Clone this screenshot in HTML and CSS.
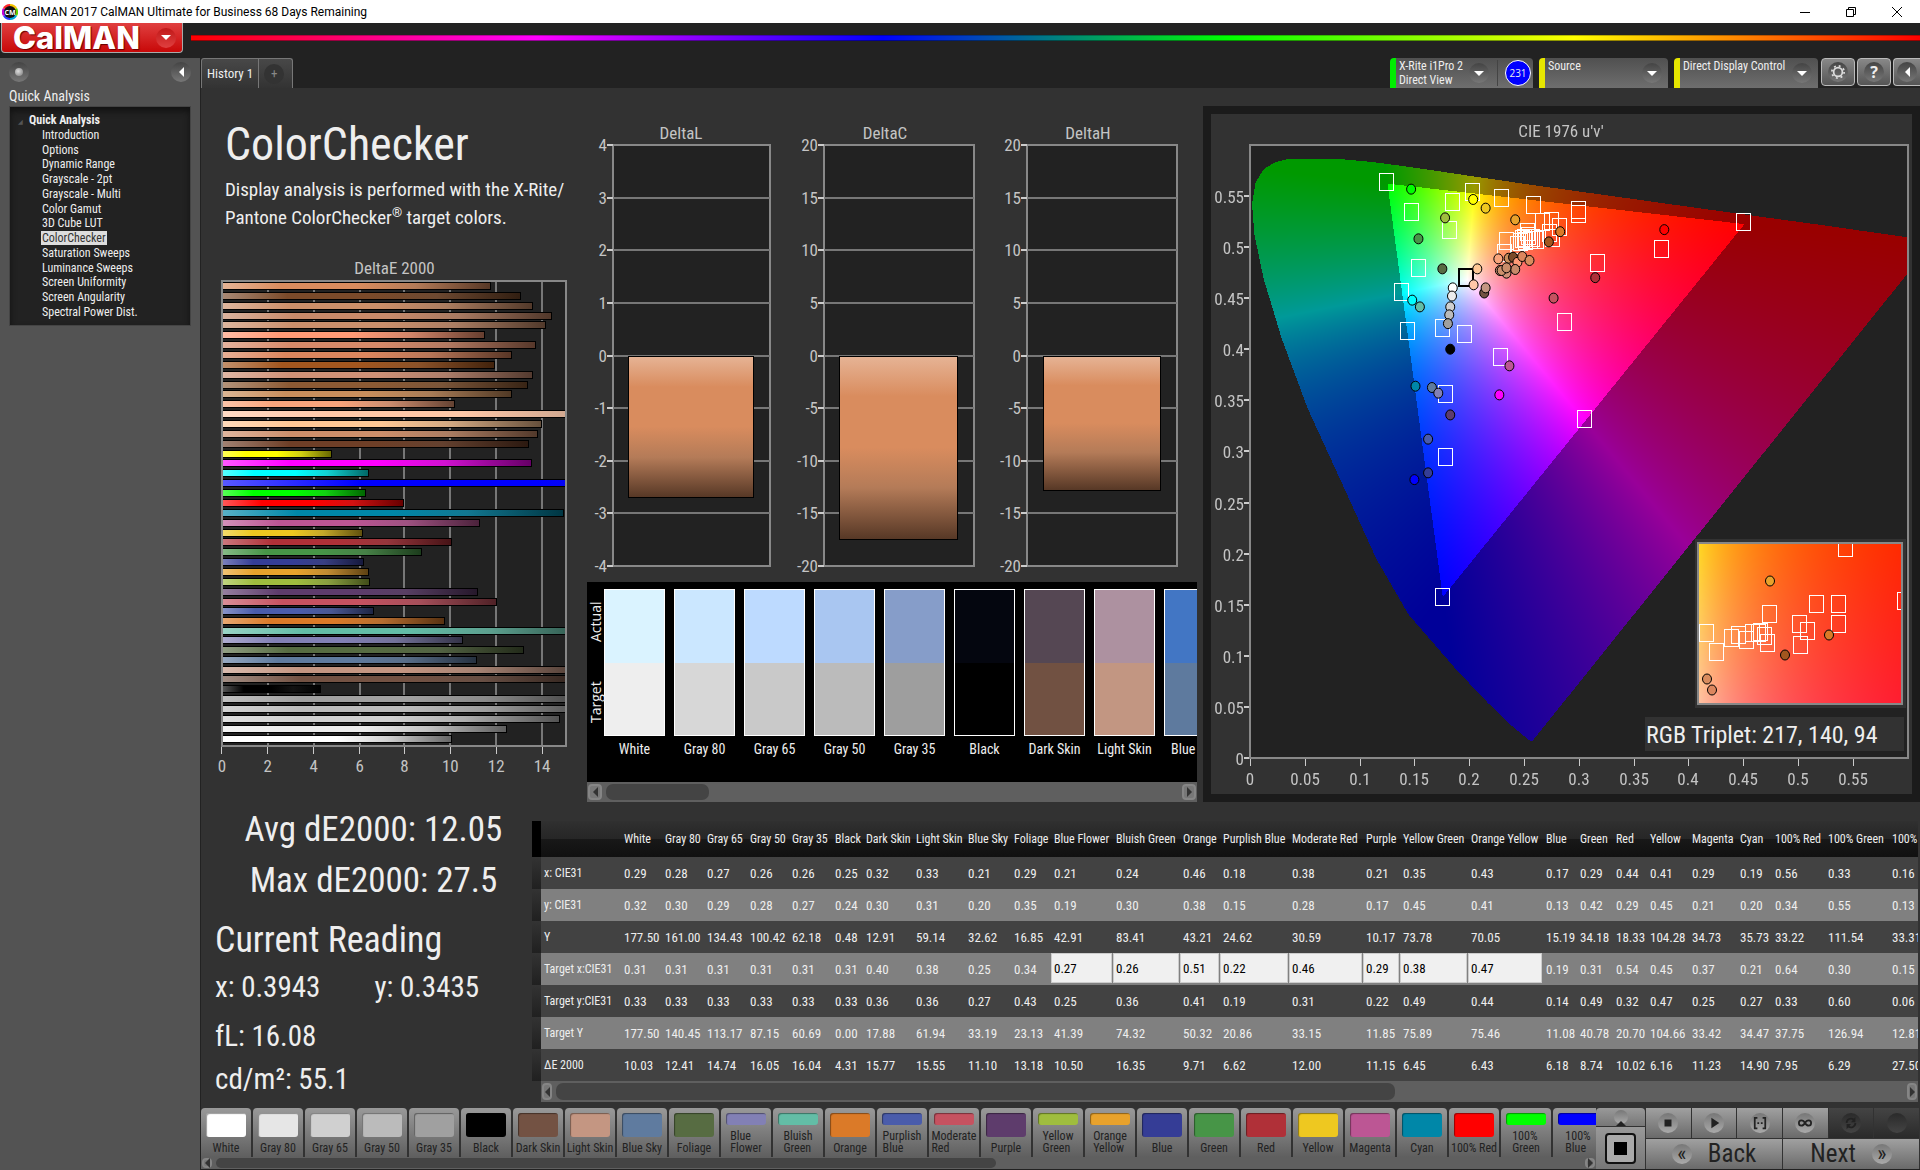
FILE: index.html
```html
<!DOCTYPE html>
<html lang="en">
<head>
  <meta charset="UTF-8" />
  <meta name="viewport" content="width=device-width, initial-scale=1.0"/>
  <title>CalMAN 2017 - ColorChecker</title>
  <link rel="stylesheet" href="styles.css">
</head>
<body>
  <div class="titlebar">
    <svg class="app-icon" viewBox="0 0 16 16" aria-hidden="true">
      <path d="M8 8V0A8 8 0 0 1 15 4z" fill="#f5c400"/>
      <path d="M8 8L15 4A8 8 0 0 1 15 12z" fill="#5fd400"/>
      <path d="M8 8L15 12A8 8 0 0 1 8 16z" fill="#00a8d8"/>
      <path d="M8 8V16A8 8 0 0 1 1 12z" fill="#2a3cff"/>
      <path d="M8 8L1 12A8 8 0 0 1 1 4z" fill="#c400d8"/>
      <path d="M8 8L1 4A8 8 0 0 1 8 0z" fill="#ff2a2a"/>
      <circle cx="8" cy="8" r="6" fill="#111"/>
      <text x="8" y="11" text-anchor="middle" class="app-icon-text">CM</text>
    </svg>
    <span class="titlebar-text">CalMAN 2017 CalMAN Ultimate for Business 68 Days Remaining</span>
    <div class="window-buttons">
      <button aria-label="Minimize"><svg viewBox="0 0 10 10"><path d="M0 5.5H10"/></svg></button>
      <button aria-label="Restore"><svg viewBox="0 0 10 10"><path d="M.5 2.5h7v7h-7zM2.5 2.5v-2h7v7h-2"/></svg></button>
      <button aria-label="Close"><svg viewBox="0 0 10 10"><path d="M0 0L10 10M10 0L0 10"/></svg></button>
    </div>
  </div>

  <header class="brand">
    <button class="logo">CalMAN<span class="logo-knob"><i class="tri down"></i></span></button>
    <div class="rainbow"></div>
  </header>

  <div class="workspace">
    <aside class="sidebar">
      <div class="sidebar-top">
        <button class="knob" aria-label="Pin"><i class="dot"></i></button>
        <button class="knob" aria-label="Collapse"><i class="tri left"></i></button>
      </div>
      <h2>Quick Analysis</h2>
      <nav class="tree">
        <div class="tree-root">Quick Analysis</div>
        <a href="#">Introduction</a>
        <a href="#">Options</a>
        <a href="#">Dynamic Range</a>
        <a href="#">Grayscale - 2pt</a>
        <a href="#">Grayscale - Multi</a>
        <a href="#">Color Gamut</a>
        <a href="#">3D Cube LUT</a>
        <a href="#" class="current">ColorChecker</a>
        <a href="#">Saturation Sweeps</a>
        <a href="#">Luminance Sweeps</a>
        <a href="#">Screen Uniformity</a>
        <a href="#">Screen Angularity</a>
        <a href="#">Spectral Power Dist.</a>
      </nav>
    </aside>

    <main class="main">
      <div class="toolbar">
        <div class="tabs">
          <button class="tab">History 1</button>
          <button class="tab tab-add" aria-label="Add history"><span>+</span></button>
        </div>
        <div class="devices">
          <button class="device meter">
            <span class="device-name">X-Rite i1Pro 2<br>Direct View</span>
            <span class="knob"><i class="tri down"></i></span>
            <span class="badge-cell"><span class="badge">231</span></span>
          </button>
          <button class="device source">
            <span class="device-name">Source</span>
            <span class="knob"><i class="tri down"></i></span>
          </button>
          <button class="device display">
            <span class="device-name">Direct Display Control</span>
            <span class="knob"><i class="tri down"></i></span>
          </button>
          <button class="tool" aria-label="Settings"><span class="knob">
            <svg viewBox="0 0 16 16" width="14" height="14"><circle cx="8" cy="8" r="5" fill="none" stroke="#ddd" stroke-width="2"/><circle cx="8" cy="8" r="7" fill="none" stroke="#ddd" stroke-width="2" stroke-dasharray="2.2 3.3"/></svg>
          </span></button>
          <button class="tool" aria-label="Help"><span class="knob">?</span></button>
          <button class="tool" aria-label="Hide"><span class="knob"><i class="tri left"></i></span></button>
        </div>
      </div>

      <div class="page">
        <section class="intro">
          <h1>ColorChecker</h1>
          <p>Display analysis is performed with the X-Rite/<br>Pantone ColorChecker<sup>®</sup> target colors.</p>
          <svg id="deltaE" viewBox="0 0 387 530" role="img" aria-label="DeltaE 2000"></svg>
        </section>

        <section class="deltas">
          <svg id="deltas" viewBox="0 0 616 460" role="img" aria-label="DeltaL, DeltaC, DeltaH"></svg>
          <div class="compare">
            <div class="compare-sides"><span>Actual</span><span>Target</span></div>
            <div class="compare-list" id="compare"></div>
          </div>
          <div class="scrollbar scroll-compare">
            <button aria-label="Scroll left"><i class="tri left"></i></button>
            <div class="thumb"></div>
            <button aria-label="Scroll right"><i class="tri right"></i></button>
          </div>
        </section>

        <section class="cie">
          <div class="cie-stack">
            <canvas id="gamut" width="701" height="680"></canvas>
            <svg id="cie" viewBox="0 0 701 680" role="img" aria-label="CIE 1976 u'v'"></svg>
          </div>
        </section>
      </div>

      <div class="results">
        <section class="stats">
          <div class="big">Avg dE2000: 12.05</div>
          <div class="big">Max dE2000: 27.5</div>
          <h3>Current Reading</h3>
          <div class="reading pair"><span>x: 0.3943</span><span>y: 0.3435</span></div>
          <div class="reading">fL: 16.08</div>
          <div class="reading">cd/m²: 55.1</div>
        </section>
        <section class="grid-wrap">
          <div class="grid-body">
            <div class="grip" id="grip"></div>
            <div class="grid-clip"><table class="grid" id="grid"></table></div>
          </div>
          <div class="scrollbar scroll-grid">
            <button aria-label="Scroll left"><i class="tri left"></i></button>
            <div class="thumb"></div>
            <button aria-label="Scroll right"><i class="tri right"></i></button>
          </div>
        </section>
      </div>

      <footer class="bottom">
        <div class="patches-wrap">
          <div class="patches" id="patches"></div>
          <div class="scrollbar scroll-patches">
            <button aria-label="Scroll left"><i class="tri left"></i></button>
            <div class="thumb"></div>
            <button aria-label="Scroll right"><i class="tri right"></i></button>
          </div>
        </div>
        <div class="window-ctl">
          <button class="up" aria-label="Expand"><span class="pill"><i class="tri up"></i></span></button>
          <button class="pattern" aria-label="Pattern window"><i></i></button>
        </div>
        <div class="transport">
          <div class="transport-row">
            <button aria-label="Stop"><span class="pill"><svg viewBox="0 0 16 16"><path d="M4 4h8v8H4z"/></svg></span></button>
            <button aria-label="Play"><span class="pill"><svg viewBox="0 0 16 16"><path d="M5 2l9 6-9 6z"/></svg></span></button>
            <button aria-label="Read series"><span class="pill"><svg viewBox="0 0 16 16"><path d="M1 1h4v2H3v10h2v2H1zM15 1h-4v2h2v10h-2v2h4zM5 7h2v2H5zM9 7h2v2H9z"/></svg></span></button>
            <button aria-label="Read continuous"><span class="pill"><svg viewBox="0 0 16 16"><path class="line" d="M8 8C6 4 1 4 1 8s5 4 7 0 7-4 7 0-5 4-7 0z"/></svg></span></button>
            <button class="off" aria-label="Auto calibrate"><span class="pill"><svg viewBox="0 0 16 16"><path class="line" d="M3 8a5 5 0 0 1 8-4M13 8a5 5 0 0 1-8 4"/><path d="M13 1v6H8zM3 15V9h5z"/></svg></span></button>
            <button class="off" aria-label="Unavailable"><span class="pill"></span></button>
          </div>
          <div class="transport-row">
            <button class="nav-btn"><span class="pill">«</span>Back</button>
            <button class="nav-btn">Next<span class="pill">»</span></button>
          </div>
        </div>
      </footer>
    </main>
  </div>

  <script src="script.js"></script>
</body>
</html>
```
FILE: styles.css
```css
* {
  box-sizing: border-box;
}

body {
  margin: 0;
  min-height: 100vh;
  display: flex;
  flex-direction: column;
  background: #222;
  color: #eee;
  font-family: 'Roboto Condensed', 'Open Sans', sans-serif;
  font-size: 12px;
  overflow: hidden;
}

button {
  font: inherit;
  color: inherit;
  border: none;
  padding: 0;
  margin: 0;
  background: none;
  cursor: pointer;
}

h1, h2, h3, p {
  margin: 0;
  font-weight: normal;
}

svg {
  display: block;
}

/* title bar */
.titlebar {
  height: 23px;
  display: flex;
  align-items: center;
  background: #fff;
  color: #000;
  padding-left: 2px;
  gap: 5px;
}

.app-icon {
  width: 16px;
  height: 16px;
}

.app-icon-text {
  font: bold 7px 'Open Sans', sans-serif;
  fill: #fff;
}

.titlebar-text {
  flex: 1;
  font-family: 'Roboto', sans-serif;
  font-size: 12px;
}

.window-buttons {
  display: flex;
}

.window-buttons button {
  width: 46px;
  display: flex;
  justify-content: center;
}

.window-buttons svg {
  width: 10px;
  height: 10px;
  fill: none;
  stroke: #000;
}

/* small shapes */
.tri {
  display: block;
  width: 0;
  height: 0;
  border: 5px solid transparent;
}

.tri.down {
  border-top-color: #fff;
  border-bottom-width: 0;
}

.tri.up {
  border-bottom-color: #222;
  border-top-width: 0;
}

.tri.left {
  border-right-color: #fff;
  border-left-width: 0;
}

.tri.right {
  border-left-color: #fff;
  border-right-width: 0;
}

.knob {
  width: 20px;
  height: 20px;
  flex: none;
  border-radius: 50%;
  display: flex;
  align-items: center;
  justify-content: center;
  background: linear-gradient(#444, #777);
}

.dot {
  width: 8px;
  height: 8px;
  border-radius: 50%;
  background: radial-gradient(circle at 40% 40%, #ddd, #777);
}

/* brand row */
.brand {
  height: 35px;
  display: flex;
  align-items: flex-start;
  gap: 8px;
  padding-left: 1px;
}

.logo {
  width: 182px;
  height: 30px;
  display: flex;
  align-items: center;
  justify-content: space-between;
  padding: 0 6px 0 11px;
  border: 1px solid #aaa;
  border-top: none;
  border-radius: 0 0 4px 4px;
  background: linear-gradient(#e04040, #c80808);
  color: #fff;
  font: 800 31px/29px Inter, sans-serif;
  text-shadow: 1px 1px 1px #600;
}

.logo-knob {
  width: 20px;
  height: 20px;
  border-radius: 50%;
  display: flex;
  align-items: center;
  justify-content: center;
  background: linear-gradient(#c01818, #e04040);
}

.rainbow {
  flex: 1;
  height: 6px;
  margin-top: 12px;
  border-top: 1px solid #0004;
  border-bottom: 1px solid #0006;
  background: linear-gradient(to right, #f00, #f0f 20%, #00f 40%, #0f0 60%, #ff0 80%, #f00);
}

/* sidebar */
.workspace {
  flex: 1;
  display: flex;
}

.sidebar {
  width: 200px;
  flex: none;
  padding: 4px 9px;
  background: #535353;
}

.sidebar-top {
  display: flex;
  justify-content: space-between;
}

.sidebar h2 {
  font-size: 14px;
  line-height: 20px;
  margin-top: 4px;
}

.tree {
  border: 1px solid #444;
  background: #222;
  box-shadow: inset 0 4px 6px #111;
  padding: 6px 0 6px 32px;
  display: flex;
  flex-direction: column;
  align-items: flex-start;
  height: 220px;
  justify-content: space-between;
}

.tree-root {
  font-weight: bold;
  margin-left: -24px;
}

.tree-root::before {
  content: "◢";
  color: #555;
  font-size: 6px;
  margin-right: 6px;
}

.tree a {
  color: #eee;
  text-decoration: none;
  line-height: 14px;
  padding: 0 1px;
  margin-left: -1px;
}

.tree a.current {
  background: #ddd;
  color: #333;
}

/* toolbar */
.main {
  flex: 1;
  min-width: 0;
  display: flex;
  flex-direction: column;
  background: #323232;
  border-left: 1px solid #222;
}

.toolbar {
  height: 30px;
  display: flex;
  justify-content: space-between;
  background: #222;
}

.tabs {
  display: flex;
}

.tab {
  padding: 0 5px;
  font-size: 13px;
  border: 1px solid #777;
  border-bottom: none;
  border-radius: 3px 0 0 0;
  background: linear-gradient(#484848, #333);
}

.tab-add {
  width: 34px;
  border-left: none;
  border-radius: 0 3px 0 0;
}

.tab-add span {
  display: block;
  width: 20px;
  height: 20px;
  line-height: 20px;
  border-radius: 50%;
  background: #333;
  color: #888;
}

.devices {
  display: flex;
  align-items: flex-start;
}

.device {
  height: 30px;
  display: flex;
  align-items: center;
  gap: 8px;
  padding: 0 6px 0 3px;
  margin-right: 6px;
  border-left: 6px solid #e6e600;
  border-radius: 4px 4px 0 0;
  background: linear-gradient(#505050, #6e6e6e);
}

.device-name {
  flex: 1;
  align-self: flex-start;
  text-align: left;
  line-height: 14px;
  padding-top: 1px;
  white-space: nowrap;
}

.meter {
  width: 143px;
  gap: 0;
  border-left-color: #0e0;
  padding-right: 2px;
}

.source {
  width: 129px;
}

.display {
  width: 144px;
  gap: 2px;
  margin-right: 3px;
}

.badge-cell {
  height: 26px;
  border-left: 1px solid #444;
  margin-left: 8px;
  padding-left: 7px;
}

.badge {
  display: block;
  width: 26px;
  height: 26px;
  line-height: 24px;
  border: 1px solid #fff;
  border-radius: 50%;
  background: #00f;
  font-size: 10px;
  font-family: 'Open Sans', sans-serif;
  text-align: center;
}

.tool {
  width: 34px;
  height: 28px;
  display: flex;
  align-items: center;
  justify-content: center;
  margin-right: 2px;
  border: 1px solid #bbb;
  border-radius: 4px;
  background: linear-gradient(#888, #555);
}

.tool .knob {
  font: bold 16px 'Open Sans', sans-serif;
}

.tool:last-child {
  width: 27px;
  margin-right: 0;
  border-right: none;
  border-radius: 4px 0 0 4px;
}

/* page */
.page {
  display: grid;
  grid-template-columns: 386fr 616fr 717fr;
}

.page > * {
  min-width: 0;
}

.intro h1 {
  font-size: 46px;
  line-height: 64px;
  padding: 24px 0 0 24px;
}

.intro p {
  font-size: 19px;
  line-height: 28px;
  padding-left: 24px;
  margin-bottom: 20px;
  white-space: nowrap;
}

.intro sup {
  font-size: 13px;
  line-height: 0;
}

.deltas > svg {
  margin-top: 34px;
}

.axis-text {
  font-size: 17px;
  fill: #c4c4c4;
}

.frame {
  fill: #222;
  stroke: #888;
  stroke-width: 2;
}

.frame-line {
  fill: none;
  stroke: #888;
  stroke-width: 2;
}

.grid-line {
  stroke: #777;
  stroke-width: 2;
}

.tick {
  stroke: #ccc;
  stroke-width: 1;
}

.tick.wide {
  stroke-width: 2;
}

.frame, .frame-line, .grid-line, .tick, .bar, .target {
  shape-rendering: crispEdges;
}

.bar {
  stroke: #000;
}

.target {
  fill: none;
  stroke: #fff;
}

.white-point {
  stroke: #000;
  stroke-width: 2;
}

.reading-dot {
  stroke: #000;
}

.triplet {
  font-size: 24px;
  fill: #eee;
}

.panel-bg {
  fill: #323232;
}

.compare {
  height: 200px;
  margin-right: 6px;
  display: flex;
  background: #000;
  overflow: hidden;
}

.compare-sides {
  width: 17px;
  flex: none;
  display: flex;
  flex-direction: column;
}

.compare-sides span {
  height: 80px;
  writing-mode: vertical-rl;
  transform: rotate(180deg);
  text-align: center;
  font: 14px/17px 'Open Sans', sans-serif;
}

.compare-list {
  display: flex;
  gap: 9px;
  padding-top: 7px;
  min-width: 0;
}

.compare-item {
  width: 61px;
  flex: none;
  text-align: center;
  font-size: 14px;
  line-height: 26px;
}

.compare-chip {
  height: 147px;
  border: 1px solid #fff;
}

.compare-chip div {
  height: 50%;
}

/* scrollbars */
.scrollbar {
  display: flex;
  gap: 4px;
  background: #5f5f5f;
}

.scrollbar button {
  width: 14px;
  flex: none;
  display: flex;
  align-items: center;
  justify-content: center;
  border: 2px solid #858585;
  border-radius: 4px;
  background: #777;
}

.scrollbar button:last-child {
  margin-left: auto;
}

.scrollbar .tri.left {
  border-right-color: #333;
}

.scrollbar .tri.right {
  border-left-color: #333;
}

.thumb {
  background: #444;
  border-radius: 7px;
}

.scroll-compare {
  height: 20px;
  margin-right: 6px;
  padding: 2px 1px;
}

.scroll-compare .thumb {
  width: 17%;
}

.scroll-grid {
  height: 21px;
  margin-left: 9px;
  padding: 2px 1px;
}

.scroll-grid button, .scroll-patches button {
  width: 10px;
}

.scroll-grid .thumb {
  width: 61%;
}

.scroll-patches {
  height: 12px;
  padding: 1px;
}

.scroll-patches .thumb {
  width: 56%;
}

/* CIE chart */
.cie {
  margin-top: 18px;
  border: 8px solid #1b1b1b;
}

.cie-stack {
  display: grid;
}

.cie-stack > * {
  grid-area: 1 / 1;
  width: 100%;
}

/* results */
.results {
  flex: 1;
  display: flex;
}

.stats {
  width: 331px;
  flex: none;
  padding: 2px 0 0 14px;
}

.stats .big {
  font-size: 35px;
  line-height: 51px;
  text-align: center;
}

.stats h3 {
  font-size: 36px;
  line-height: 52px;
  margin-top: 8px;
}

.reading {
  font-size: 29px;
  line-height: 43px;
}

.pair {
  display: flex;
  gap: 54px;
  margin-bottom: 6px;
}

.grid-wrap {
  flex: 1;
  min-width: 0;
  margin: 19px 2px 0 0;
}

.grid-body {
  display: flex;
}

.grip {
  width: 9px;
  flex: none;
}

.grip div {
  height: 32px;
  background: linear-gradient(#333, #202020);
}

.grip div:first-child {
  height: 36px;
  background: #000;
}

.grid-clip {
  flex: 1;
  min-width: 0;
  overflow: hidden;
}

.grid {
  table-layout: fixed;
  width: 1440px;
  border-collapse: collapse;
  font-size: 13px;
}

.grid th, .grid td {
  padding: 0 0 0 3px;
  text-align: left;
  font-weight: normal;
  white-space: nowrap;
  height: 32px;
}

.grid th {
  font-size: 12px;
}

.grid thead th {
  height: 36px;
  background: linear-gradient(#303030, #262626 50%, #181818 51%, #101010);
}

.grid tbody tr {
  background: #424242;
}

.grid tbody tr:nth-child(even) {
  background: #808080;
}

.grid td.edit {
  padding: 0 1px 2px 0;
}

.grid input {
  display: block;
  width: 100%;
  height: 30px;
  border: none;
  border-radius: 0;
  padding: 0 0 0 3px;
  background: #f0f0f0;
  box-shadow: inset 0 0 0 1px #ccc;
  color: #000;
  font: inherit;
}

/* bottom bar */
.bottom {
  display: flex;
  height: 62px;
  border-bottom: 1px solid #222;
}

.patches-wrap {
  flex: 1;
  min-width: 0;
}

.patches {
  display: flex;
  gap: 2px;
  overflow: hidden;
}

.patch {
  width: 50px;
  height: 49px;
  flex: none;
  display: flex;
  flex-direction: column;
  align-items: center;
  justify-content: space-between;
  padding-top: 5px;
  border-radius: 4px 4px 0 0;
  background: linear-gradient(#999, #5f5f5f);
  color: #222;
  line-height: 12px;
  white-space: nowrap;
}

.patch span {
  text-align: left;
  padding-bottom: 3px;
}

.patch i {
  display: block;
  width: 40px;
  height: 24px;
  border-radius: 3px;
  box-shadow: inset 1px 1px 1px #0006;
}

.patch.two i {
  height: 12px;
}

.window-ctl {
  width: 49px;
  display: flex;
  flex-direction: column;
  gap: 1px;
  margin-right: 1px;
}

.window-ctl button {
  display: flex;
  align-items: center;
  justify-content: center;
  background: linear-gradient(#999, #777);
}

.window-ctl .up {
  height: 18px;
  border-radius: 4px 4px 0 0;
}

.window-ctl .pattern {
  flex: 1;
}

.pattern i {
  width: 31px;
  height: 31px;
  border: 2px solid #111;
  border-radius: 4px;
  padding: 7px;
  background: linear-gradient(#000 0 0) content-box, #aaa;
}

.pill {
  width: 20px;
  height: 20px;
  flex: none;
  border-radius: 50%;
  display: flex;
  align-items: center;
  justify-content: center;
  background: linear-gradient(#777, #aaa);
}

.pill svg {
  width: 14px;
  height: 14px;
  fill: #222;
}

.pill .line {
  fill: none;
  stroke: #222;
  stroke-width: 2;
}

.up .pill {
  width: 14px;
  height: 14px;
}

.transport {
  width: 274px;
  display: flex;
  flex-direction: column;
  gap: 1px;
  padding-right: 1px;
}

.transport-row {
  flex: 1;
  display: flex;
  gap: 1px;
}

.transport-row button {
  flex: 1;
  display: flex;
  align-items: center;
  justify-content: center;
  gap: 16px;
  background: linear-gradient(#a0a0a0, #6a6a6a);
  color: #222;
}

.transport-row .off {
  background: linear-gradient(#444, #2a2a2a);
}

.off .pill {
  background: linear-gradient(#2a2a2a, #444);
}

.transport-row .nav-btn {
  font-size: 25px;
  line-height: 28px;
}

.nav-btn .pill {
  font-size: 22px;
  line-height: 16px;
}
```
FILE: script.js
```javascript
const NS = 'http://www.w3.org/2000/svg';

function add(parent, tag, attrs, text) {
  const el = document.createElementNS(NS, tag);
  for (const key in attrs) el.setAttribute(key, attrs[key]);
  if (text !== undefined) el.textContent = text;
  parent.appendChild(el);
  return el;
}

function mix(hex, other, amount) {
  const a = parseInt(hex.slice(1), 16);
  const part = shift => {
    const v = (a >> shift) & 255;
    return Math.round(v + (other - v) * amount);
  };
  return `rgb(${part(16)}, ${part(8)}, ${part(0)})`;
}

let gradientCount = 0;

// glossy bar fill: light start, plain middle, dark end
function barFill(svg, color, vertical) {
  const id = 'fill' + gradientCount++;
  const g = add(svg, 'linearGradient', vertical ? { id, x1: 0, y1: 0, x2: 0, y2: 1 } : { id });
  add(g, 'stop', { offset: 0, 'stop-color': mix(color, 255, 0.35) });
  add(g, 'stop', { offset: 0.22, 'stop-color': color });
  add(g, 'stop', { offset: 0.5, 'stop-color': color });
  add(g, 'stop', { offset: 0.72, 'stop-color': mix(color, 70, 0.25) });
  add(g, 'stop', { offset: 1, 'stop-color': mix(color, 0, 0.6) });
  return `url(#${id})`;
}

// DeltaE 2000
const deltaE = [
  [11.73, '#d98c5e'], [13.03, '#7a4a2a'], [13.57, '#cc8f69'], [14.4, '#c88a6a'], [14.15, '#cb8f6c'],
  [11.45, '#ff9a76'], [13.7, '#d68a6a'], [12.65, '#dc865e'], [11.9, '#a2561f'], [13.55, '#cf9176'],
  [13.35, '#8c5a34'], [12.65, '#c88e5c'], [10.15, '#f9a57c'], [21, '#ffc8a8'], [13.95, '#ffc896'],
  [13.8, '#cd8f6b'], [13.4, '#6e3f27'], [4.8, '#ffff00'], [13.5, '#ff00ff'], [6.43, '#00ffff'],
  [27.5, '#0000ff'], [6.29, '#00ff00'], [7.95, '#ff0000'], [14.9, '#0087a8'], [11.23, '#bc5694'],
  [6.16, '#eec820'], [10.02, '#b03038'], [8.74, '#479547'], [6.18, '#353d96'], [6.43, '#e8a22c'],
  [6.45, '#9fbd3e'], [11.15, '#5e3c6c'], [12, '#c65260'], [6.62, '#4a5cab'], [9.71, '#db7a28'],
  [16.35, '#63bda6'], [10.5, '#8280b5'], [13.18, '#576c42'], [11.1, '#5f7b9f'], [15.55, '#c49682'],
  [15.77, '#735243'], [4.31, '#000000'], [16.04, '#a0a0a0'], [16.05, '#bbbbbb'], [14.74, '#d0d0d0'],
  [12.41, '#ececec'], [10.03, '#ffffff']
];

function drawDeltaE() {
  const svg = document.getElementById('deltaE');
  const left = 21, top = 29, width = 345, height = 466, unit = 22.93;
  add(svg, 'text', { x: 194, y: 22, 'text-anchor': 'middle', class: 'axis-text' }, 'DeltaE 2000');
  add(svg, 'rect', { x: left, y: top, width, height, class: 'frame' });
  for (let v = 0; v <= 14; v += 2) {
    const x = Math.round(left + v * unit);
    if (v) add(svg, 'line', { x1: x, x2: x, y1: top, y2: top + height, class: 'grid-line' });
    add(svg, 'line', { x1: x, x2: x, y1: top + height, y2: top + height + 8, class: 'tick' });
    add(svg, 'text', { x, y: top + height + 26, 'text-anchor': 'middle', class: 'axis-text' }, v);
  }
  const clip = add(svg, 'clipPath', { id: 'deltaEClip' });
  add(clip, 'rect', { x: left, y: top, width, height });
  const bars = add(svg, 'g', { 'clip-path': 'url(#deltaEClip)' });
  deltaE.forEach(([value, color], i) => {
    const y = Math.round(top + 2 + i * 9.86);
    add(bars, 'rect', { x: left, y, width: Math.round(value * unit), height: 7, fill: barFill(svg, color), class: 'bar' });
  });
  add(svg, 'rect', { x: left, y: top, width, height, class: 'frame-line' });
}

// DeltaL / DeltaC / DeltaH
function drawDelta(svg, title, center, x, width, max, value, barX, barWidth) {
  const top = 23, height = 421;
  add(svg, 'text', { x: center, y: 17, 'text-anchor': 'middle', class: 'axis-text' }, title);
  add(svg, 'rect', { x, y: top, width, height, class: 'frame' });
  for (let i = 0; i <= 8; i++) {
    const y = Math.round(top + i * height / 8);
    add(svg, 'line', { x1: x - 6, x2: x, y1: y, y2: y, class: 'tick wide' });
    if (i > 0 && i < 8) add(svg, 'line', { x1: x, x2: x + width, y1: y, y2: y, class: 'grid-line' });
    add(svg, 'text', { x: x - 6, y: y + 6, 'text-anchor': 'end', class: 'axis-text' }, max - i * max / 4);
  }
  const zero = Math.round(top + height / 2);
  add(svg, 'rect', { x: barX, y: zero, width: barWidth, height: Math.round(value / max * height / 2), fill: barFill(svg, '#d98c5e', true), class: 'bar' });
}

// CIE 1976 chart
const locus = [
  [.2568, .0166], [.2536, .0185], [.2461, .0250], [.2347, .0354], [.2161, .0549], [.1877, .0871], [.1441, .1410],
  [.1147, .1956], [.0828, .2708], [.0521, .3427], [.0282, .4117], [.0119, .4698], [.0035, .5131], [.0014, .5432],
  [.0046, .5638], [.0123, .5770], [.0231, .5837], [.0350, .5868], [.0501, .5868], [.0792, .5868], [.1127, .5835],
  [.1531, .5776], [.2026, .5697], [.2623, .5604], [.3315, .5501], [.4035, .5393], [.4691, .5296], [.5202, .5221],
  [.5565, .5165], [.6234, .5065]
];
const triangle = [[.4507, .5229], [.125, .5625], [.1754, .1579]];

const U = u => 39 + u * 1096;
const V = v => 644 - v * 1022;

function inside(poly, u, v) {
  let hit = false;
  for (let i = 0, j = poly.length - 1; i < poly.length; j = i++) {
    const [ui, vi] = poly[i], [uj, vj] = poly[j];
    if ((vi > v) !== (vj > v) && u < (uj - ui) * (v - vi) / (vj - vi) + ui) hit = !hit;
  }
  return hit;
}

function uvColor(u, v) {
  const X = 9 * u / (4 * v), Z = (12 - 3 * u - 20 * v) / (4 * v);
  const rgb = [
    3.2406 * X - 1.5372 - 0.4986 * Z,
    -0.9689 * X + 1.8758 + 0.0415 * Z,
    0.0557 * X - 0.2040 + 1.0570 * Z
  ].map(c => Math.max(c, 0));
  const top = Math.max(...rgb);
  const dim = inside(triangle, u, v) ? 255 : 153;
  return rgb.map(c => dim * c / top);
}

function paint(ctx, x0, y0, w, h, toUV) {
  const img = ctx.getImageData(x0, y0, w, h);
  for (let y = 0; y < h; y++) {
    for (let x = 0; x < w; x++) {
      const [u, v] = toUV(x, y);
      if (!inside(locus, u, v)) continue;
      img.data.set([...uvColor(u, v), 255], (y * w + x) * 4);
    }
  }
  ctx.putImageData(img, x0, y0);
}

const targets = [
  [.124, .565], [.147, .535], [.184, .545], [.203, .555], [.229, .549], [.258, .542], [.2995, .537], [.2995, .533],
  [.450, .525], [.375, .4995], [.317, .485], [.182, .518], [.153, .480], [.138, .457], [.1437, .4185], [.1755, .422],
  [.195, .4155], [.2865, .428], [.228, .3935], [.1776, .357], [.3046, .3325], [.1776, .2958], [.1755, .159],
  [.266, .5256], [.275, .5262], [.2815, .5207], [.2333, .507], [.232, .495], [.2526, .516], [.244, .503], [.248, .5086],
  [.251, .507], [.254, .512], [.257, .5096], [.2606, .5083], [.273, .515], [.2757, .510], [.2467, .5054], [.250, .510],
  [.2555, .508]
];
const readings = [
  [.147, .5566, '#00ff00'], [.2036, .5465, '#ffff00'], [.215, .538, '#eec820'], [.178, .5285, '#9fbd3e'],
  [.242, .5266, '#e8a22c'], [.1537, .508, '#479547'], [.1755, .4786, '#576c42'], [.283, .515, '#db7a28'],
  [.2727, .505, '#a2561f'], [.378, .517, '#ff0000'], [.315, .470, '#b03038'], [.277, .450, '#c65260'],
  [.2266, .4884, '#f9a57c'], [.2074, .4786, '#ffc896'], [.204, .463, '#ffc8a8'], [.2137, .455, '#735243'],
  [.215, .460, '#c49682'], [.236, .489, '#c88e5c'], [.240, .490, '#7a4a2a'], [.244, .485, '#ff9a76'],
  [.2484, .4907, '#dc865e'], [.255, .4868, '#d98c5e'], [.242, .478, '#c88a6a'], [.234, .4744, '#cf9176'],
  [.228, .477, '#cb8f6c'], [.2296, .477, '#cd8f6b'], [.234, .4796, '#c98d6a'], [.148, .448, '#00ffff'],
  [.155, .4414, '#63bda6'], [.185, .460, '#ffffff'], [.1843, .452, '#ececec'], [.1827, .4414, '#d0d0d0'],
  [.1818, .4336, '#bbbbbb'], [.1806, .425, '#a0a0a0'], [.1827, .400, '#000000'], [.2367, .3837, '#bc5694'],
  [.151, .3638, '#0087a8'], [.166, .3625, '#5f7b9f'], [.1718, .357, '#8280b5'], [.2275, .3553, '#ff00ff'],
  [.1827, .3357, '#5e3c6c'], [.1625, .312, '#4a5cab'], [.1625, .279, '#353d96'], [.150, .2724, '#0000ff']
];

// zoomed view, in pixels of the small frame
const zoomTargets = [
  [147, 4], [118, 60], [140, 60], [206, 57], [71, 70], [101, 80], [109, 87], [140, 80], [102, 101], [8, 89],
  [18, 108], [33, 94], [40, 91], [48, 96], [54, 89], [60, 89], [62, 88], [66, 92], [69, 99]
];
const zoomReadings = [[72, 38, '#e8a22c'], [131, 92, '#db7a28'], [87, 112, '#a2561f'], [9, 136, '#d98c5e'], [14, 147, '#dc865e']];

function target(svg, x, y, extra = '') {
  add(svg, 'rect', { x: Math.round(x) - 7, y: Math.round(y) - 8, width: 14, height: 17, class: 'target ' + extra });
}

function drawCie() {
  const svg = document.getElementById('cie');
  const ctx = document.getElementById('gamut').getContext('2d');
  const left = 39, top = 31, width = 658, height = 613;
  const zx = 487, zy = 429, zw = 204, zh = 161;

  ctx.fillStyle = '#323232';
  ctx.fillRect(0, 0, 701, 680);
  ctx.fillStyle = '#222';
  ctx.fillRect(left, top, width, height);
  paint(ctx, left, top, width, height, (x, y) => [x / 1096, (height - y) / 1022]);
  ctx.fillStyle = '#323232';
  ctx.fillRect(zx - 3, zy - 4, zw + 7, zh + 8);
  paint(ctx, zx, zy, zw, zh, (x, y) => [.213 + x / zw * .127, .5365 - y / zh * .055]);

  add(svg, 'text', { x: 350, y: 23, 'text-anchor': 'middle', class: 'axis-text' }, "CIE 1976 u'v'");
  for (let i = 0; i <= 11; i++) {
    const label = String(+(i * 0.05).toFixed(2));
    const x = Math.round(U(i * 0.05)), y = Math.round(V(i * 0.05));
    add(svg, 'line', { x1: x, x2: x, y1: top + height, y2: top + height + 8, class: 'tick' });
    add(svg, 'text', { x, y: 671, 'text-anchor': 'middle', class: 'axis-text' }, label);
    add(svg, 'line', { x1: left - 6, x2: left, y1: y, y2: y, class: 'tick wide' });
    add(svg, 'text', { x: left - 6, y: y + 7, 'text-anchor': 'end', class: 'axis-text' }, label);
  }
  add(svg, 'rect', { x: left, y: top, width, height, class: 'frame-line' });
  targets.forEach(([u, v]) => target(svg, U(u), V(v)));
  target(svg, U(.197), V(.4705), 'white-point');
  readings.forEach(([u, v, fill]) => add(svg, 'ellipse', { cx: U(u), cy: V(v), rx: 4.5, ry: 5, fill, class: 'reading-dot' }));

  const inner = add(svg, 'svg', { x: zx, y: zy, width: zw, height: zh });
  zoomTargets.forEach(([x, y]) => target(inner, x, y));
  zoomReadings.forEach(([x, y, fill]) => add(inner, 'ellipse', { cx: x, cy: y, rx: 4.5, ry: 5, fill, class: 'reading-dot' }));
  add(svg, 'rect', { x: zx, y: zy, width: zw, height: zh, class: 'frame-line' });

  add(svg, 'rect', { x: 434, y: 603, width: 259, height: 34, class: 'panel-bg' });
  add(svg, 'text', { x: 435, y: 629, class: 'triplet' }, 'RGB Triplet: 217, 140, 94');
}

// actual / target patches
const compare = [
  ['White', '#daf3ff', '#eeeeee'], ['Gray 80', '#cbe7ff', '#d7d7d7'], ['Gray 65', '#bddaff', '#c9c9c9'],
  ['Gray 50', '#a9c6f1', '#bbbbbb'], ['Gray 35', '#869dc9', '#9e9e9e'], ['Black', '#04060f', '#000000'],
  ['Dark Skin', '#554753', '#715142'], ['Light Skin', '#ad91a0', '#c29682'], ['Blue Sky', '#4276c4', '#5e7a9e']
];
document.getElementById('compare').innerHTML = compare.map(([name, actual, goal]) => `
  <div class="compare-item">
    <div class="compare-chip"><div style="background:${actual}"></div><div style="background:${goal}"></div></div>
    ${name}
  </div>`).join('');

// measurement table
const columns = [
  ['', 80], ['White', 41], ['Gray 80', 42], ['Gray 65', 43], ['Gray 50', 42], ['Gray 35', 43], ['Black', 31],
  ['Dark Skin', 50], ['Light Skin', 52], ['Blue Sky', 46], ['Foliage', 40], ['Blue Flower', 62], ['Bluish Green', 67],
  ['Orange', 40], ['Purplish Blue', 69], ['Moderate Red', 74], ['Purple', 37], ['Yellow Green', 68],
  ['Orange Yellow', 75], ['Blue', 34], ['Green', 36], ['Red', 34], ['Yellow', 42], ['Magenta', 48], ['Cyan', 35],
  ['100% Red', 53], ['100% Green', 64], ['100% Blue', 92]
];
const rows = [
  'x: CIE31|0.29 0.28 0.27 0.26 0.26 0.25 0.32 0.33 0.21 0.29 0.21 0.24 0.46 0.18 0.38 0.21 0.35 0.43 0.17 0.29 0.44 0.41 0.29 0.19 0.56 0.33 0.16',
  'y: CIE31|0.32 0.30 0.29 0.28 0.27 0.24 0.30 0.31 0.20 0.35 0.19 0.30 0.38 0.15 0.28 0.17 0.45 0.41 0.13 0.42 0.29 0.45 0.21 0.20 0.34 0.55 0.13',
  'Y|177.50 161.00 134.43 100.42 62.18 0.48 12.91 59.14 32.62 16.85 42.91 83.41 43.21 24.62 30.59 10.17 73.78 70.05 15.19 34.18 18.33 104.28 34.73 35.73 33.22 111.54 33.31',
  'Target x:CIE31|0.31 0.31 0.31 0.31 0.31 0.31 0.40 0.38 0.25 0.34 0.27 0.26 0.51 0.22 0.46 0.29 0.38 0.47 0.19 0.31 0.54 0.45 0.37 0.21 0.64 0.30 0.15',
  'Target y:CIE31|0.33 0.33 0.33 0.33 0.33 0.33 0.36 0.36 0.27 0.43 0.25 0.36 0.41 0.19 0.31 0.22 0.49 0.44 0.14 0.49 0.32 0.47 0.25 0.27 0.33 0.60 0.06',
  'Target Y|177.50 140.45 113.17 87.15 60.69 0.00 17.88 61.94 33.19 23.13 41.39 74.32 50.32 20.86 33.15 11.85 75.89 75.46 11.08 40.78 20.70 104.66 33.42 34.47 37.75 126.94 12.81',
  'ΔE 2000|10.03 12.41 14.74 16.05 16.04 4.31 15.77 15.55 11.10 13.18 10.50 16.35 9.71 6.62 12.00 11.15 6.45 6.43 6.18 8.74 10.02 6.16 11.23 14.90 7.95 6.29 27.50'
];
document.getElementById('grid').innerHTML =
  '<colgroup>' + columns.map(c => `<col style="width:${c[1]}px">`).join('') + '</colgroup>' +
  '<thead><tr>' + columns.map(c => `<th>${c[0]}</th>`).join('') + '</tr></thead><tbody>' +
  rows.map((row, r) => {
    const [name, values] = row.split('|');
    return `<tr><th>${name}</th>` + values.split(' ').map((value, i) =>
      r === 3 && i >= 10 && i <= 17
        ? `<td class="edit"><input value="${value}" aria-label="${name} ${columns[i + 1][0]}"></td>`
        : `<td>${value}</td>`).join('') + '</tr>';
  }).join('') + '</tbody>';
document.getElementById('grip').innerHTML = '<div></div>'.repeat(8);

// bottom patches
const patches = [
  ['White', '#ffffff'], ['Gray 80', '#e6e6e6'], ['Gray 65', '#d0d0d0'], ['Gray 50', '#bbbbbb'], ['Gray 35', '#a0a0a0'],
  ['Black', '#000000'], ['Dark Skin', '#735243'], ['Light Skin', '#c49682'], ['Blue Sky', '#5f7b9f'],
  ['Foliage', '#576c42'], ['Blue<br>Flower', '#8280b5'], ['Bluish<br>Green', '#63bda6'], ['Orange', '#db7a28'],
  ['Purplish<br>Blue', '#4a5cab'], ['Moderate<br>Red', '#c65260'], ['Purple', '#5e3c6c'], ['Yellow<br>Green', '#9fbd3e'],
  ['Orange<br>Yellow', '#e8a22c'], ['Blue', '#353d96'], ['Green', '#479547'], ['Red', '#b03038'], ['Yellow', '#eec820'],
  ['Magenta', '#bc5694'], ['Cyan', '#0087a8'], ['100% Red', '#ff0000'], ['100%<br>Green', '#00ff00'], ['100%<br>Blue', '#0000ff']
];
document.getElementById('patches').innerHTML = patches.map(([name, color]) =>
  `<button class="patch${name.includes('<br>') ? ' two' : ''}"><i style="background:${color}"></i><span>${name}</span></button>`).join('');

drawDeltaE();
const deltas = document.getElementById('deltas');
drawDelta(deltas, 'DeltaL', 94, 26, 157, 4, 2.68, 41, 125);
drawDelta(deltas, 'DeltaC', 298, 237, 150, 20, 17.4, 252, 118);
drawDelta(deltas, 'DeltaH', 501, 440, 150, 20, 12.75, 456, 117);
drawCie();
```
